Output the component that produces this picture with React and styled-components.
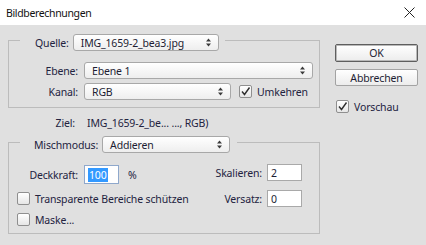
import React from "react";
import styled, { createGlobalStyle } from "styled-components";

const GlobalStyle = createGlobalStyle`
  html, body {
    margin: 0;
    padding: 0;
    background: #e0e0e0;
  }
  body {
    font-family: "Noto Sans", "Liberation Sans", sans-serif;
    font-size: 10.5px;
    letter-spacing: -0.15px;
    color: #23233f;
  }
`;

const Window = styled.div`
  width: 426px;
  height: 245px;
  background: #e0e0e0;
  display: flex;
  flex-direction: column;
  overflow: hidden;
`;

const TitleBar = styled.div`
  height: 25px;
  flex-shrink: 0;
  background: #fff;
  display: flex;
  align-items: center;
  justify-content: space-between;
  padding: 0 11px 0 6px;
  font-size: 10.5px;
  letter-spacing: -0.35px;
  color: #111;
`;

const Body = styled.div`
  display: flex;
  gap: 15px;
  padding: 9px 0 0 8px;
`;

const LeftCol = styled.div`
  width: 312px;
  display: flex;
  flex-direction: column;
`;

const Group = styled.fieldset`
  margin: ${({ $top }) => $top || 0}px 0 0 0;
  padding: ${({ $pt }) => $pt}px 6px 7px 0;
  border: 1px solid #bcbcbc;
  min-width: 0;
`;

const Legend = styled.legend`
  margin-left: 11px;
  padding: 0 ${({ $pr }) => $pr}px 0 ${({ $pl }) => $pl}px;
  height: 12px;
`;

const LegendRow = styled.span`
  display: flex;
  align-items: center;
  gap: 4px;
  height: 17px;
`;

const Rows = styled.div`
  display: flex;
  flex-direction: column;
  gap: ${({ $gap }) => $gap}px;
`;

const Row = styled.div`
  display: flex;
  align-items: center;
  height: ${({ $h }) => $h || 17}px;
`;

const Label = styled.span`
  width: ${({ $w }) => $w || 69}px;
  flex-shrink: 0;
  text-align: right;
  margin-right: ${({ $mr }) => ($mr === undefined ? 6 : $mr)}px;
  white-space: nowrap;
`;

const SelectBox = styled.div`
  box-sizing: border-box;
  width: ${({ $w }) => $w}px;
  height: 17px;
  border: 1px solid #a8a8a8;
  border-radius: 3px;
  background: linear-gradient(#ffffff, #eeeeee);
  display: flex;
  align-items: center;
  justify-content: space-between;
  padding: 0 7px 0 7px;
  color: #1d1d33;
  white-space: nowrap;
`;

const Field = styled.div`
  box-sizing: border-box;
  width: 35px;
  height: ${({ $h }) => $h || 17}px;
  background: #fff;
  border: 1px solid ${({ $focus }) => ($focus ? "#8fa8cc" : "#a9a9a9")};
  display: flex;
  align-items: center;
  padding-left: 3px;
  color: #1d1d33;
`;

const Selected = styled.span`
  background: #3399ff;
  color: #fff;
  padding: 0 1px;
  line-height: 14px;
`;

const Box = styled.span`
  box-sizing: border-box;
  width: 13px;
  height: 13px;
  flex-shrink: 0;
  border: 1px solid #8f8f8f;
  border-radius: 2px;
  background: linear-gradient(#ffffff, #e6e6e6);
  display: flex;
  align-items: center;
  justify-content: center;
  margin-right: 5px;
`;

const CheckRow = styled.label`
  display: flex;
  align-items: center;
  height: 13px;
  margin: ${({ $mt }) => $mt || 0}px 0 0 ${({ $ml }) => $ml || 0}px;
  white-space: nowrap;
`;

const Ziel = styled.div`
  display: flex;
  align-items: center;
  height: 14px;
  margin-top: 8px;
`;

const Split = styled.div`
  display: flex;
  justify-content: space-between;
`;

const SubCol = styled.div`
  display: flex;
  flex-direction: column;
  gap: ${({ $gap }) => $gap}px;
  margin: ${({ $m }) => $m};
`;

const Percent = styled.span`
  margin-left: 9px;
`;

const RightCol = styled.div`
  width: 83px;
  display: flex;
  flex-direction: column;
  padding-top: 10px;
`;

const Button = styled.button`
  box-sizing: border-box;
  width: 83px;
  height: ${({ $h }) => $h}px;
  margin-top: ${({ $mt }) => $mt || 0}px;
  font: inherit;
  letter-spacing: inherit;
  color: #1d1d33;
  border-radius: 2px;
  border: 1px solid ${({ $primary }) => ($primary ? "#5e5e5e" : "#a3a3a3")};
  box-shadow: ${({ $primary }) => ($primary ? "inset 0 0 0 1px #b9b9b9" : "none")};
  background: linear-gradient(#ffffff, #ececec);
  padding: 0;
`;

const Arrows = () => (
  <svg width="5" height="9" viewBox="0 0 5 9">
    <path d="M0 3.5 L2.5 0.5 L5 3.5Z M0 5.5 L2.5 8.5 L5 5.5Z" fill="#3a3a3a" />
  </svg>
);

const Select = ({ w, children }) => (
  <SelectBox $w={w}>
    <span>{children}</span>
    <Arrows />
  </SelectBox>
);

const Check = ({ checked, children, ml, mt }) => (
  <CheckRow $ml={ml} $mt={mt}>
    <Box>
      {checked && (
        <svg width="11" height="11" viewBox="0 0 11 11">
          <path d="M2 5.5 L4.5 8.5 L9.5 1.5" fill="none" stroke="#2e2e2e" strokeWidth="1.4" />
        </svg>
      )}
    </Box>
    {children}
  </CheckRow>
);

export default function App() {
  return (
    <Window>
      <GlobalStyle />
      <TitleBar>
        <span>Bildberechnungen</span>
        <svg width="11" height="11" viewBox="0 0 11 11">
          <path d="M0.5 0.5 L10.5 10.5 M10.5 0.5 L0.5 10.5" stroke="#222" strokeWidth="1" />
        </svg>
      </TitleBar>
      <Body>
        <LeftCol>
          <Group $pt={16}>
            <Legend $pl={15} $pr={6}>
              <LegendRow>
                <span>Quelle:</span>
                <Select w={146}>IMG_1659-2_bea3.jpg</Select>
              </LegendRow>
            </Legend>
            <Rows $gap={4}>
              <Row>
                <Label>Ebene:</Label>
                <Select w={229}>Ebene 1</Select>
              </Row>
              <Row>
                <Label>Kanal:</Label>
                <Select w={147}>RGB</Select>
                <Check checked ml={8}>Umkehren</Check>
              </Row>
            </Rows>
          </Group>

          <Ziel>
            <Label $w={67} $mr={12}>Ziel:</Label>
            <span>IMG_1659-2_be... ..., RGB)</span>
          </Ziel>

          <Group $top={6} $pt={17}>
            <Legend $pl={14} $pr={7}>
              <LegendRow>
                <span>Mischmodus:</span>
                <Select w={128}>Addieren</Select>
              </LegendRow>
            </Legend>
            <Split>
              <SubCol $gap={8} $m="0">
                <Row $h={19}>
                  <Label>Deckkraft:</Label>
                  <Field $h={19} $focus>
                    <Selected>100</Selected>
                  </Field>
                  <Percent>%</Percent>
                </Row>
                <Check ml={8}>Transparente Bereiche schützen</Check>
                <Check ml={8}>Maske...</Check>
              </SubCol>
              <SubCol $gap={9} $m="-1px 11px 0 0">
                <Row>
                  <Label $w={60} $mr={5}>Skalieren:</Label>
                  <Field>2</Field>
                </Row>
                <Row>
                  <Label $w={60} $mr={5}>Versatz:</Label>
                  <Field>0</Field>
                </Row>
              </SubCol>
            </Split>
          </Group>
        </LeftCol>

        <RightCol>
          <Button $primary $h={18}>OK</Button>
          <Button $h={17} $mt={7}>Abbrechen</Button>
          <Check checked ml={1} mt={14}>Vorschau</Check>
        </RightCol>
      </Body>
    </Window>
  );
}
